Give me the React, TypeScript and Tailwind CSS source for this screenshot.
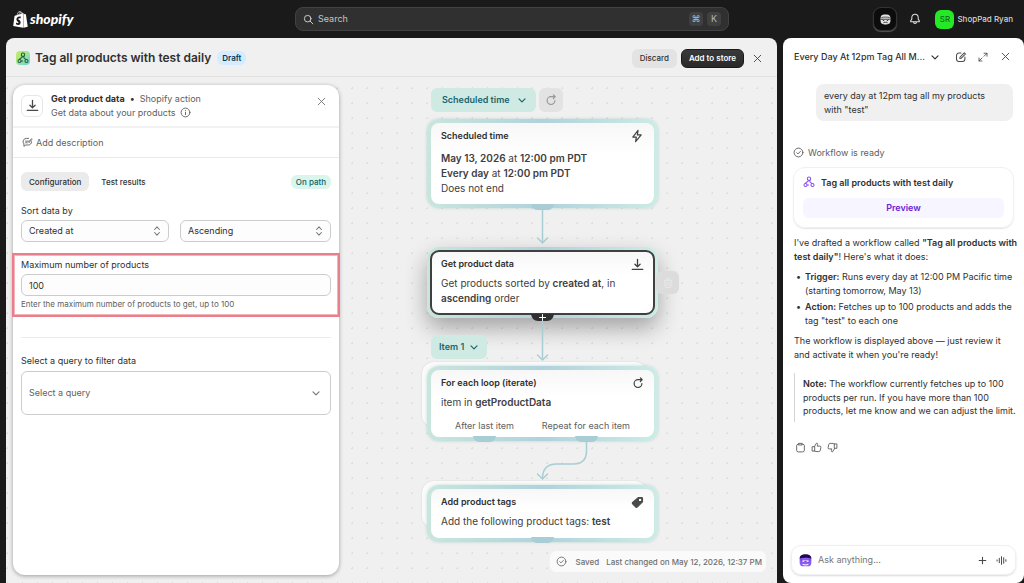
import type { ReactNode } from "react";
import clsx from "clsx";
import { FaShopify } from "react-icons/fa";

interface IconProps {
  className?: string;
  children: ReactNode;
}

function Icon({ className = "size-3", children }: IconProps) {
  return (
    <svg
      viewBox="0 0 20 20"
      fill="none"
      stroke="currentColor"
      strokeWidth="1.7"
      strokeLinecap="round"
      strokeLinejoin="round"
      aria-hidden="true"
      className={clsx("shrink-0", className)}
    >
      {children}
    </svg>
  );
}

const CloseIcon = ({ className }: { className?: string }) => (
  <Icon className={className}>
    <path d="M4 4l12 12M16 4L4 16" />
  </Icon>
);

const ChevronIcon = ({ className }: { className?: string }) => (
  <Icon className={className}>
    <path d="M5 8l5 5 5-5" strokeWidth="2" />
  </Icon>
);

const ImportIcon = ({ className }: { className?: string }) => (
  <Icon className={className}>
    <path d="M10 2v11M6 9.5l4 4 4-4M2 17.5h16" strokeWidth="2" />
  </Icon>
);

const RefreshIcon = ({ className }: { className?: string }) => (
  <Icon className={className}>
    <path d="M16.5 11a6.5 6.5 0 1 1-6.5-6.5h6.5M14 1.5l3 3-3 3" strokeWidth="2" />
  </Icon>
);

const CheckCircleIcon = ({ className }: { className?: string }) => (
  <Icon className={className}>
    <circle cx="10" cy="10" r="8" />
    <path d="M6.8 10.4l2.2 2.2 4.4-4.6" />
  </Icon>
);

const FlowIcon = ({ className }: { className?: string }) => (
  <Icon className={className}>
    <circle cx="10" cy="4.5" r="2.8" />
    <circle cx="4.2" cy="15" r="2.6" />
    <circle cx="15.8" cy="15" r="2.6" />
    <path d="M8.6 7v1.2c0 2.2-4 1.6-4.3 4.1M11.4 7v2.2c0 1.8 2.4 1.6 3.4 3.4M6.8 15h2.6" />
  </Icon>
);

function SidekickFace({ className }: { className?: string }) {
  return (
    <svg viewBox="0 0 20 20" aria-hidden="true" className={className}>
      <rect x="1" y="1" width="18" height="18" rx="7" fill="currentColor" />
      <path d="M2.500 6.500c4.500-1.200 10.500-1.200 15 0" stroke="#1a1a1a" strokeWidth="1.300" fill="none" />
      <path
        d="M1 9.500h18M4.500 10.500l3.500 2.500M15.500 10.500L12 13"
        stroke="#1a1a1a"
        strokeWidth="1.500"
        fill="none"
      />
      <path d="M6 16c2.400-1 5.600-1 8 0" stroke="#1a1a1a" strokeWidth="1.400" fill="none" />
    </svg>
  );
}

function PurpleFace() {
  return (
    <svg viewBox="0 0 20 20" aria-hidden="true" className="size-[13px] shrink-0">
      <rect x="1" y="1" width="18" height="18" rx="6" fill="#8b5cf6" />
      <path d="M1 7c0-4 3-6.500 9-6.500S19 3 19 7c-5-1.500-13-1.500-18 0z" fill="#1e0a4a" />
      <path
        d="M1.500 9h17M4.500 9v4h3l2.500-2.500 2.500 2.500h3V9"
        stroke="#6d35e0"
        strokeWidth="1.200"
        fill="#ede9fe"
      />
      <path d="M5.500 15.500c2.500 1.500 6.500 1.500 9 0" stroke="#fff" strokeWidth="1.600" fill="none" />
    </svg>
  );
}

function TopBar() {
  return (
    <header className="flex h-[38px] shrink-0 items-center justify-between pr-[11px] pl-[13px]">
      <a href="#" className="flex w-[282px] items-center gap-[2px] text-white">
        <FaShopify className="h-[17px] w-[15px]" />
        <span className="font-[Lato,sans-serif] text-[14px] leading-4 font-black italic">shopify</span>
      </a>
      <label className="flex h-6 max-w-[434px] min-w-0 flex-1 items-center gap-1 rounded-lg border border-[#424242] bg-[#303030] px-[7px]">
        <Icon className="size-[11px] text-[#d4d4d4]">
          <circle cx="8.500" cy="8.500" r="6" />
          <path d="M13 13l5 5" />
        </Icon>
        <input
          type="search"
          placeholder="Search"
          aria-label="Search"
          className="min-w-0 flex-1 bg-transparent text-[9px] placeholder:text-[#c4c4c4]"
        />
        <kbd className="flex size-[14px] items-center justify-center rounded-sm bg-[#404040] font-[Inter,sans-serif] text-[9px] text-[#b5b5b5]">
          ⌘
        </kbd>
        <kbd className="flex size-[14px] items-center justify-center rounded-sm bg-[#404040] font-[Inter,sans-serif] text-[9px] text-[#b5b5b5]">
          K
        </kbd>
      </label>
      <div className="flex w-[284px] items-center justify-end">
        <button
          aria-label="Sidekick"
          className="mr-3 flex size-6 items-center justify-center rounded-lg border border-[#333] bg-[#0c0c0c] text-[#e3e3e3] shadow-[0_1px_1px_#555]"
        >
          <SidekickFace className="size-[11px]" />
        </button>
        <button aria-label="Notifications" className="mr-[14px] text-[#e3e3e3]">
          <Icon>
            <path d="M10 2a5.300 5.300 0 0 0-5.300 5.300v2.900L2.800 13c-.5.900 0 1.600.9 1.600h12.600c.9 0 1.400-.7.9-1.600l-1.900-2.800V7.300A5.300 5.300 0 0 0 10 2zM7.500 15c.2 3.300 4.800 3.300 5 0" />
          </Icon>
        </button>
        <button className="flex items-center gap-[3px] text-[8px] font-medium text-[#d4d4d4]">
          <span className="flex size-[19px] items-center justify-center rounded-md bg-[#26e926] text-[8px] font-normal text-[#0a5c1c]">
            SR
          </span>
          ShopPad Ryan
        </button>
      </div>
    </header>
  );
}

function SelectBox({ label, value, options }: { label: string; value: string; options: string[] }) {
  return (
    <>
      <select
        aria-label={label}
        defaultValue={value}
        className="col-start-1 row-start-1 h-[22px] w-full appearance-none rounded-md border border-[#ccc] bg-[#fdfdfd] px-[7px] text-[9px]"
      >
        {options.map((option) => (
          <option key={option}>{option}</option>
        ))}
      </select>
      <Icon className="pointer-events-none col-start-1 row-start-1 mr-[6px] size-3 justify-self-end text-[#777]">
        <path d="M6 7.500l4-4.500 4 4.500M6 12.500l4 4.500 4-4.500" />
      </Icon>
    </>
  );
}

function ConfigPanel() {
  return (
    <section className="z-10 my-2 ml-[7px] flex w-[326px] shrink-0 flex-col rounded-xl bg-white shadow-[0_1px_4px_rgba(0,0,0,0.35)]">
      <div className="flex h-[43px] items-center border-b-2 border-[#f1f1f1] px-2">
        <span className="flex size-[22px] items-center justify-center rounded-md border border-[#e6e6e6] text-[#4a4a4a]">
          <ImportIcon className="size-[13px]" />
        </span>
        <div className="ml-2 flex-1 text-[9px] leading-[14px] text-[#616161]">
          <p>
            <strong className="font-bold text-[#303030]">Get product data</strong>
            <span className="px-[5px] text-[#303030]">•</span>
            Shopify action
          </p>
          <p className="flex items-center gap-1">
            Get data about your products
            <Icon className="size-[11px]">
              <circle cx="10" cy="10" r="8" />
              <path d="M10 9.500v4.500M10 6.300v.2" />
            </Icon>
          </p>
        </div>
        <button aria-label="Close panel" className="mr-1 mb-2 text-[#777]">
          <CloseIcon className="size-[11px]" />
        </button>
      </div>
      <button className="flex h-[30px] shrink-0 items-center gap-[3px] border-b border-[#ebebeb] px-[9px] text-[9px] text-[#616161]">
        <Icon className="size-[11px]">
          <path d="M12 2.500H8a6 6 0 0 0-4.500 10v4.500l3.500-2.500h4.500c3.500 0 6-2.500 6-6M6.500 7.500h5M6.500 10.500h3M12.500 8.500l5-5.500M12.500 10.500l5.500-6" />
        </Icon>
        Add description
      </button>
      <div className="mt-[14px] flex items-center px-2 text-[8px] font-medium">
        <button className="h-[19px] rounded-md bg-[#ebebeb] px-2">Configuration</button>
        <button className="ml-1 h-[19px] px-2">Test results</button>
        <span className="ml-auto flex h-[14px] items-center rounded-md bg-[#d9f5ec] px-[5px] text-[#0d6068]">
          On path
        </span>
      </div>
      <div className="mt-[14px] px-2">
        <p className="text-[9px] leading-3">Sort data by</p>
        <div className="mt-[3px] flex gap-[11px]">
          <div className="grid w-[148px] items-center">
            <SelectBox label="Sort field" value="Created at" options={["Created at", "Updated at", "Title"]} />
          </div>
          <div className="grid flex-1 items-center">
            <SelectBox label="Sort direction" value="Ascending" options={["Ascending", "Descending"]} />
          </div>
        </div>
      </div>
      <div className="-mx-px mt-[11px] border-2 border-[#e87f8b] px-[7px] pt-1 pb-[5px] ring-1 ring-[#e87f8b]/60 ring-inset">
        <label htmlFor="max" className="block text-[9px] leading-3">
          Maximum number of products
        </label>
        <input
          id="max"
          defaultValue="100"
          aria-describedby="max-help"
          className="mt-[3px] block h-[22px] w-full rounded-md border border-[#ccc] bg-[#fdfdfd] px-[7px] text-[9px]"
        />
        <p id="max-help" className="mt-[2px] text-[8px] leading-3 text-[#616161]">
          Enter the maximum number of products to get, up to 100
        </p>
      </div>
      <hr className="mx-2 mt-5 border-[#ebebeb]" />
      <div className="mt-[17px] px-2">
        <label htmlFor="query" className="block text-[9px] leading-3">
          Select a query to filter data
        </label>
        <div className="mt-1 grid items-center">
          <select
            id="query"
            className="col-start-1 row-start-1 h-11 w-full appearance-none rounded-md border border-[#ccc] bg-white px-[7px] text-[9px] text-[#616161]"
          >
            <option>Select a query</option>
          </select>
          <ChevronIcon className="pointer-events-none col-start-1 row-start-1 mr-[9px] size-3 justify-self-end text-[#777]" />
        </div>
      </div>
    </section>
  );
}

interface NodeProps {
  title: string;
  icon: ReactNode;
  className: string;
  selected?: boolean;
  stacked?: boolean;
  children: ReactNode;
}

function FlowNode({ title, icon, className, selected, stacked, children }: NodeProps) {
  return (
    <div className={clsx("absolute left-[88px] w-[231px]", className)}>
      {stacked && (
        <div className="absolute top-[-4px] right-[11px] bottom-[14px] left-[-5px] rounded-xl bg-[#fafafa] shadow-[0_0_2px_rgba(0,0,0,0.12)]" />
      )}
      <div
        className={clsx(
          "relative h-full rounded-xl bg-linear-to-r from-[#c9e6dd] via-[#b0d2dc] to-[#cdece6] p-1",
          selected ? "shadow-[0_10px_22px_rgba(0,0,0,0.32)]" : "shadow-[0_0_3px_rgba(120,190,180,0.5)]",
        )}
      >
        <article
          className={clsx(
            "h-full rounded-lg bg-linear-to-b from-[#f7f7f7] to-white to-40% px-[10px] pt-[6px] text-[#404040]",
            selected && "outline-2 -outline-offset-1 outline-[#404040]",
          )}
        >
          <div className="flex items-center justify-between">
            <h2 className="text-[9px] leading-[14px] font-semibold text-[#303030]">{title}</h2>
            {icon}
          </div>
          {children}
        </article>
      </div>
    </div>
  );
}

const chip = "absolute flex items-center rounded-md bg-[#cfeae2] font-semibold text-[#1a6570] text-[9px]";

function Canvas() {
  return (
    <div className="relative min-w-0 flex-1">
      <svg
        width="380"
        height="500"
        fill="none"
        stroke="#a9cdd4"
        strokeWidth="1.5"
        strokeLinecap="round"
        aria-hidden="true"
        className="absolute top-0 left-0 z-10"
      >
        <path d="M203.500 132v33M198.500 161l5 5 5-5" />
        <path d="M203.500 243v39M198.500 278l5 5 5-5" />
        <path d="M247.500 364v10q0 13-13 13h-17q-13 0-14 13M198.500 397l5 5 5-5" />
        <g stroke="none" fill="#a9cdd4">
          <path d="M192 127h23q-1 6-7 6h-9q-6 0-7-6z" />
          <path d="M134 359h23q-1 6-7 6h-9q-6 0-7-6z" />
          <path d="M236 359h23q-1 6-7 6h-9q-6 0-7-6z" />
          <path d="M192 460h23q-1 6-7 6h-9q-6 0-7-6z" />
        </g>
        <path d="M192 237h23q-1 7-7 7h-9q-6 0-7-7z" fill="#303030" stroke="none" />
        <path d="M200.500 240.500h6M203.500 237.500v6" stroke="#fff" strokeWidth="1" />
      </svg>

      <button className={clsx(chip, "top-[11px] left-[92px] h-6 gap-[6px] pr-2 pl-[11px]")}>
        Scheduled time
        <ChevronIcon className="size-3" />
      </button>
      <button
        aria-label="Rerun"
        className="absolute top-[11px] left-[200px] flex size-6 items-center justify-center rounded-md bg-[#e3e3e3] text-[#999]"
      >
        <RefreshIcon />
      </button>

      <FlowNode
        title="Scheduled time"
        className="top-[42px] h-[89px]"
        icon={
          <Icon className="size-[14px]">
            <path d="M11.500 2L4 11.500h5L8 18l8-9.500h-5.500z" />
          </Icon>
        }
      >
        <p className="mt-[8px] text-[10px] leading-[15px]">
          <b className="font-semibold">May 13, 2026</b> at <b className="font-semibold">12:00 pm PDT</b>
          <br />
          <b className="font-semibold">Every day</b> at <b className="font-semibold">12:00 pm PDT</b>
          <br />
          Does not end
        </p>
      </FlowNode>

      <FlowNode
        title="Get product data"
        selected
        className="top-[170px] h-[71px]"
        icon={<ImportIcon className="size-[13px]" />}
      >
        <p className="mt-[5px] text-[10px] leading-[15px]">
          Get products sorted by <b className="font-semibold">created at</b>, in{" "}
          <b className="font-semibold">ascending</b> order
        </p>
      </FlowNode>
      <button
        aria-label="Delete step"
        className="absolute top-[194px] left-[317px] flex size-[23px] items-center justify-center rounded-md bg-[#dcdcdc] text-[#e8e8e8]"
      >
        <Icon>
          <path d="M3 5.500h14M7 5.500a3 3 0 0 1 6 0M4.500 5.500l.5 9a3 3 0 0 0 3 3h4a3 3 0 0 0 3-3l.5-9M8.300 9v5M11.700 9v5" />
        </Icon>
      </button>

      <button className={clsx(chip, "top-[258px] left-[92px] h-6 gap-1 pr-[7px] pl-2")}>
        Item 1
        <ChevronIcon className="size-3" />
      </button>

      <FlowNode
        title="For each loop (iterate)"
        stacked
        className="top-[289px] h-[75px]"
        icon={<RefreshIcon />}
      >
        <p className="mt-[5px] text-[10px] leading-[15px]">
          item in <b className="font-semibold">getProductData</b>
        </p>
        <div className="mt-[9px] flex justify-between px-[14px] text-[9px] leading-[14px] text-[#616161]">
          <span>After last item</span>
          <span>Repeat for each item</span>
        </div>
      </FlowNode>

      <FlowNode
        title="Add product tags"
        stacked
        className="top-[408px] h-[57px]"
        icon={
          <Icon className="size-[13px] text-[#4a4a4a]">
            <path
              d="M11 2.500h5.500a1.200 1.200 0 0 1 1.200 1.200V9L9.500 17a1.500 1.500 0 0 1-2.200 0L2.500 12.200a1.500 1.500 0 0 1 0-2.200z"
              fill="currentColor"
            />
            <circle cx="14" cy="6" r="1" fill="#fff" stroke="#fff" />
          </Icon>
        }
      >
        <p className="mt-[5px] text-[10px] leading-[15px]">
          Add the following product tags: <b className="font-semibold">test</b>
        </p>
      </FlowNode>

      <p className="absolute right-[11px] bottom-[11px] z-20 flex h-[21px] items-center rounded-md bg-[#fafafa] px-1 text-[8px] font-medium whitespace-nowrap text-[#707070]">
        <CheckCircleIcon className="mx-[2px] size-[11px]" />
        <span className="ml-[6px]">Saved</span>
        <span className="ml-[7px]">Last changed on May 12, 2026, 12:37 PM</span>
      </p>
    </div>
  );
}

function Editor() {
  return (
    <main className="flex min-w-0 flex-1 flex-col rounded-t-lg bg-[#f0f0f0]">
      <div className="flex h-[39px] shrink-0 items-center border-b border-[#e0e0e0] px-[10px] pt-[2px]">
        <span className="flex size-[14px] items-center justify-center rounded-sm bg-linear-to-br from-[#c8f03c] to-[#6fd0d8] text-[#1f5a3c]">
          <FlowIcon className="size-3" />
        </span>
        <h1 className="ml-[5px] text-[12px] font-semibold">Tag all products with test daily</h1>
        <span className="ml-[6px] flex h-[14px] items-center rounded-md bg-[#d5ebff] px-[5px] text-[8px] font-semibold text-[#003a5a]">
          Draft
        </span>
        <div className="ml-auto flex items-center text-[8px]">
          <button className="h-[19px] rounded-md bg-[#e3e3e3] px-2 font-medium">Discard</button>
          <button className="ml-1 h-[19px] rounded-md border border-[#1a1a1a] bg-linear-to-b from-[#3a3a3a] to-[#2a2a2a] px-[7px] font-semibold text-white">
            Add to store
          </button>
          <button aria-label="Close editor" className="mr-1 ml-2 text-[#4a4a4a]">
            <CloseIcon className="size-[11px]" />
          </button>
        </div>
      </div>
      <div className="flex min-h-0 flex-1 bg-[radial-gradient(circle,#dedede_1px,transparent_1px)] bg-[length:15px_15px] bg-position-[-6px_4px]">
        <ConfigPanel />
        <Canvas />
      </div>
    </main>
  );
}

function Bullet({ children }: { children: ReactNode }) {
  return (
    <li className="flex before:w-[11px] before:shrink-0 before:pl-[2px] before:content-['•']">
      <p>{children}</p>
    </li>
  );
}

function Assistant() {
  return (
    <aside className="flex w-[241px] shrink-0 flex-col rounded-lg bg-white text-[9px] leading-normal">
      <div className="flex h-[37px] shrink-0 items-center pr-[13px] pl-[11px] text-[#4a4a4a]">
        <button className="flex flex-1 items-center justify-between font-medium whitespace-nowrap text-[#303030]">
          Every Day At 12pm Tag All M...
          <ChevronIcon />
        </button>
        <button aria-label="New chat" className="ml-[14px]">
          <Icon>
            <path d="M10 3.500H6.500a4 4 0 0 0-4 4v6a4 4 0 0 0 4 4h6a4 4 0 0 0 4-4V10M8 12.500l.5-2.500 7-7 2 2-7 7z" />
          </Icon>
        </button>
        <button aria-label="Expand" className="ml-[11px]">
          <Icon className="size-[10px]">
            <path d="M12 2.500h6v6M18 2.500l-6 6M8 18H2v-6M2 18l6-6" />
          </Icon>
        </button>
        <button aria-label="Close chat" className="ml-3">
          <CloseIcon className="size-[11px]" />
        </button>
      </div>
      <div className="flex flex-1 flex-col pr-[10px] pl-[11px]">
        <p className="mt-[9px] mr-px ml-[22px] rounded-lg bg-[#f0f0f0] px-2 py-[5px]">
          every day at 12pm tag all my products with "test"
        </p>
        <p className="mt-[25px] flex items-center gap-1 text-[#616161]">
          <CheckCircleIcon className="-ml-px size-[11px]" />
          Workflow is ready
        </p>
        <div className="mt-[7px] -ml-px rounded-xl border border-[#f0f0f0] px-[9px] pt-2 pb-[9px] shadow-[0_1px_1px_rgba(0,0,0,0.1)]">
          <p className="flex items-center gap-[6px] font-semibold">
            <FlowIcon className="size-3 text-[#8b4df5]" />
            Tag all products with test daily
          </p>
          <button className="mt-[9px] h-5 w-full rounded-md bg-[#f7f5ff] font-semibold text-[#6b21d6]">
            Preview
          </button>
        </div>
        <p className="-mr-2 mt-2">
          I've drafted a workflow called <b className="font-semibold">"Tag all products with test daily"</b>! Here's what it
          does:
        </p>
        <ul className="mt-[7px] space-y-[3px]">
          <Bullet>
            <b className="font-semibold">Trigger:</b> Runs every day at 12:00 PM Pacific time (starting tomorrow, May 13)
          </Bullet>
          <Bullet>
            <b className="font-semibold">Action:</b> Fetches up to 100 products and adds the tag "test" to each one
          </Bullet>
        </ul>
        <p className="mt-[7px]">The workflow is displayed above — just review it and activate it when you're ready!</p>
        <blockquote className="-mr-2 mt-3 border-l border-[#d4d4d4] py-1 pl-2">
          <b className="font-semibold">Note:</b> The workflow currently fetches up to 100 products per run. If you have more
          than 100 products, let me know and we can adjust the limit.
        </blockquote>
        <div className="mt-5 ml-px flex gap-[5px] text-[#616161]">
          <button aria-label="Copy">
            <Icon className="size-[11px]">
              <path d="M7 4H6a3 3 0 0 0-3 3v8a3 3 0 0 0 3 3h8a3 3 0 0 0 3-3V7a3 3 0 0 0-3-3h-1M7 2.500h6v3H7z" />
            </Icon>
          </button>
          <button aria-label="Good response">
            <Icon className="size-[11px]">
              <path d="M6 8.500H2v8h4zM6 8.500l4-6.500c2 0 2.500 1.500 2 3l-.7 2.500H16a2 2 0 0 1 2 2.400l-1.200 5.500a2.500 2.500 0 0 1-2.500 2H9L6 16" />
            </Icon>
          </button>
          <button aria-label="Bad response">
            <Icon className="size-[11px]">
              <path d="M14 11.500h4v-8h-4zM14 11.500L10 18c-2 0-2.500-1.500-2-3l.7-2.500H4a2 2 0 0 1-2-2.400l1.200-5.500a2.500 2.500 0 0 1 2.500-2H11L14 4" />
            </Icon>
          </button>
        </div>
      </div>
      <form className="mx-2 mb-2 flex h-[30px] shrink-0 items-center rounded-[10px] border border-[#f0f0f0] px-[7px] text-[#4a4a4a] shadow-[0_1px_2px_rgba(0,0,0,0.15)]">
        <PurpleFace />
        <input
          type="text"
          aria-label="Ask anything"
          placeholder="Ask anything..."
          className="ml-[6px] min-w-0 flex-1 text-[9px] placeholder:text-[#777]"
        />
        <button type="button" aria-label="Attach">
          <Icon className="size-[11px]">
            <path d="M10 4v12M4 10h12" strokeWidth="2" />
          </Icon>
        </button>
        <button type="button" aria-label="Voice" className="mr-px ml-2">
          <Icon className="size-[11px]">
            <path d="M2 9v2M6 6v8M10 3v14M14 5v10M18 8.500v3" strokeWidth="1.800" />
          </Icon>
        </button>
      </form>
    </aside>
  );
}

export default function App() {
  return (
    <div className="flex h-screen flex-col overflow-hidden bg-[#1a1a1a] font-[Inter,sans-serif] text-[#303030]">
      <TopBar />
      <div className="flex min-h-0 flex-1 gap-[6px] pl-[6px]">
        <Editor />
        <Assistant />
      </div>
    </div>
  );
}
